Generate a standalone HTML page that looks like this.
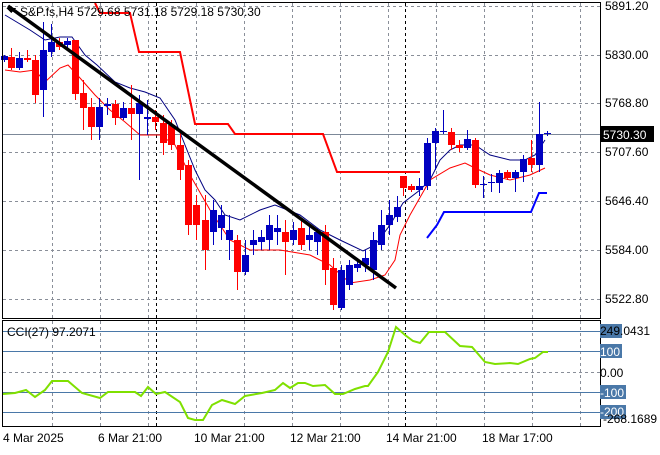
<!DOCTYPE html>
<html><head><meta charset="utf-8"><style>
body{margin:0;background:#fff;width:660px;height:450px;overflow:hidden;font-family:"Liberation Sans",sans-serif}
svg text{font-family:"Liberation Sans",sans-serif;font-size:12px;fill:#000}
</style></head><body>
<svg id="s" width="660" height="450" xmlns="http://www.w3.org/2000/svg" shape-rendering="crispEdges">
<rect x="0" y="0" width="660" height="450" fill="#fff"/>
<g id="grid" stroke="#8a8f99" stroke-dasharray="3,3" stroke-width="1"></g>
<line x1="3" y1="134.5" x2="600" y2="134.5" stroke="#7c8898"/>
<line x1="156.5" y1="3" x2="156.5" y2="426" stroke="#000" stroke-dasharray="3,3"/>
<line x1="405.5" y1="3" x2="405.5" y2="426" stroke="#000" stroke-dasharray="3,3"/>
<g id="ind" fill="none" shape-rendering="auto"></g>
<g id="cd"></g>
<line x1="8" y1="6" x2="396" y2="288" stroke="#000" stroke-width="3.5" shape-rendering="auto"/>
<g stroke="#4a78a8"><line x1="3" y1="331.5" x2="600" y2="331.5"/><line x1="3" y1="351.5" x2="600" y2="351.5"/><line x1="3" y1="392.5" x2="600" y2="392.5"/><line x1="3" y1="412.5" x2="600" y2="412.5"/></g>
<line x1="3" y1="372.5" x2="600" y2="372.5" stroke="#8a8f99" stroke-dasharray="3,3"/>
<polyline fill="none" stroke="#7fe000" stroke-width="2" shape-rendering="auto" points="3,394 15,393 26,390 35,397 45,390 52,381 68,381 82,393 100,398 108,392 122,392 135,392 141,396 148,387 156,394 165,392 180,402 188,418 195,420 203,420 212,405 222,400 235,404 245,396 262,393 275,390 283,383 290,388 298,383 305,383 313,386 325,385 335,394 343,394 355,389 365,386 368,386 378,372 388,352 396,327 405,335 413,341 420,343 429,332 445,332 460,346 472,347 485,362 495,364 510,363 518,364 530,359 535,358 543,352 548,352"/>
<g fill="none" stroke="#000"><rect x="2.5" y="2.5" width="598" height="316"/><rect x="2.5" y="320.5" width="598" height="106"/></g>
<polygon points="6,8 16,8 11,13" fill="#000"/>
<text x="20" y="16">S&amp;P.fs,H4  5729.68 5731.18 5729.18 5730.30</text>
<text x="7" y="336">CCI(27) 97.2071</text>
<g id="ax"></g>
<rect x="600" y="126" width="54" height="16" fill="#000"/>
<text x="603" y="139" style="fill:#fff">5730.30</text>
<g fill="#4a78a8"><rect x="600" y="324" width="22" height="14"/><rect x="600" y="344" width="22" height="14"/><rect x="600" y="385" width="26" height="14"/><rect x="600" y="405" width="26" height="14"/></g>
<text x="600" y="335">249.0431</text>
<text x="600" y="356" style="fill:#fff">100</text>
<text x="600" y="377">0.00</text>
<text x="600" y="397" style="fill:#fff">-100</text>
<text x="600" y="416" style="fill:#fff">-200</text>
<text x="603" y="423">-268.1689</text>
<text x="3" y="442">4 Mar 2025</text>
<text x="98" y="442">6 Mar 21:00</text>
<text x="194" y="442">10 Mar 21:00</text>
<text x="290" y="442">12 Mar 21:00</text>
<text x="386" y="442">14 Mar 21:00</text>
<text x="482" y="442">18 Mar 17:00</text>
</svg>
<script>
var NS="http://www.w3.org/2000/svg";
function el(p,t,a){var e=document.createElementNS(NS,t);for(var k in a)e.setAttribute(k,a[k]);p.appendChild(e);return e;}
var g=document.getElementById('grid');
[52,100,148,196,244,292,340,388,436,484,532,580].forEach(function(x){el(g,'line',{x1:x+.5,y1:3,x2:x+.5,y2:426});});
var ax=document.getElementById('ax');
[[6,'5891.20'],[55,'5830.00'],[103,'5768.80'],[152,'5707.60'],[201,'5646.40'],[250,'5584.00'],[299,'5522.80']].forEach(function(a){
 el(g,'line',{x1:3,y1:a[0]+.5,x2:600,y2:a[0]+.5});
 var t=el(ax,'text',{x:605,y:a[0]+4});t.textContent=a[1];});
var ind=document.getElementById('ind');
el(ind,'polyline',{stroke:'#f00','stroke-width':2,points:'95,3 100,13 130,13 139,52 180,52 195,124 228,124 235,134 323,134 337,172 420,172'});
el(ind,'polyline',{stroke:'#00f','stroke-width':2,points:'427,238 437,225 444,212 531,212 539,193 547,193'});
el(ind,'polyline',{stroke:'#000080','stroke-width':1,points:'5,15 30,30 45,40 60,37 72,37 85,55 97,65 115,82 130,88 145,92 160,98 175,120 185,145 195,170 205,190 215,200 225,215 240,220 260,210 275,205 300,215 320,230 340,240 363,251 375,245 390,225 403,203 420,190 430,180 440,160 450,150 460,145 475,145 490,155 510,160 525,160 535,155 545,140'});
el(ind,'polyline',{stroke:'#f00','stroke-width':1,points:'5,70 20,72 35,70 45,82 60,68 68,65 80,78 95,95 110,110 125,122 140,135 160,135 175,145 190,175 210,210 230,240 250,250 280,250 310,255 330,265 350,283 370,280 385,275 395,260 400,235 410,215 430,180 450,168 465,163 475,168 490,175 510,180 530,175 545,168'});
var C=[[4,60,56,55,62],[11,57,68,48,70],[19,68,58,52,70],[27,58,60,50,62],[35,60,95,55,103],[43,90,50,22,117],[51,52,42,24,57],[59,42,47,38,50],[67,45,41,38,48],[75,40,94,40,100],[83,93,108,80,130],[91,107,127,98,140],[99,127,107,98,140],[107,106,104,98,115],[115,104,118,100,125],[123,118,108,102,120],[131,108,114,85,140],[139,114,103,95,180],[147,119,117,100,135],[155,117,122,110,130],[163,123,143,115,155],[171,125,145,120,150],[180,145,170,130,180],[188,165,225,160,235],[196,205,225,195,240],[205,220,250,195,270],[213,232,210,200,245],[221,228,215,205,240],[229,240,230,215,260],[237,240,272,235,290],[245,272,255,240,275],[253,245,240,230,255],[261,242,237,230,250],[269,240,225,215,250],[277,232,228,215,245],[285,232,242,220,275],[293,240,230,222,245],[301,228,245,220,250],[309,240,235,225,250],[317,242,232,228,255],[325,232,270,225,285],[333,268,305,258,310],[341,308,270,265,310],[349,285,265,260,290],[357,268,264,258,272],[365,265,258,250,272],[373,270,240,232,280],[381,245,225,210,250],[389,225,215,200,235],[397,217,207,196,222],[403,176,188,176,196],[411,186,190,184,192],[419,190,186,178,196],[427,186,143,138,190],[435,143,131,128,170],[443,132,131,110,134],[451,132,145,128,150],[459,145,148,140,152],[467,148,139,130,150],[475,140,185,138,188],[483,185,184,176,198],[491,183,182,174,192],[499,183,173,170,193],[507,172,178,170,180],[515,178,172,170,192],[523,172,159,155,182],[531,158,165,140,172],[539,165,134,102,172],[547,134,133,131,136]];
var cd=document.getElementById('cd');
C.forEach(function(c){var up=c[2]<c[1];var col=up?'#0000c0':'#f00';
 el(cd,'line',{x1:c[0]+.5,y1:c[3],x2:c[0]+.5,y2:c[4],stroke:col});
 var t=Math.min(c[1],c[2]),h=Math.max(1,Math.abs(c[1]-c[2]));
 el(cd,'rect',{x:c[0]-3,y:t,width:7,height:h,fill:col});});
</script>
</body></html>
